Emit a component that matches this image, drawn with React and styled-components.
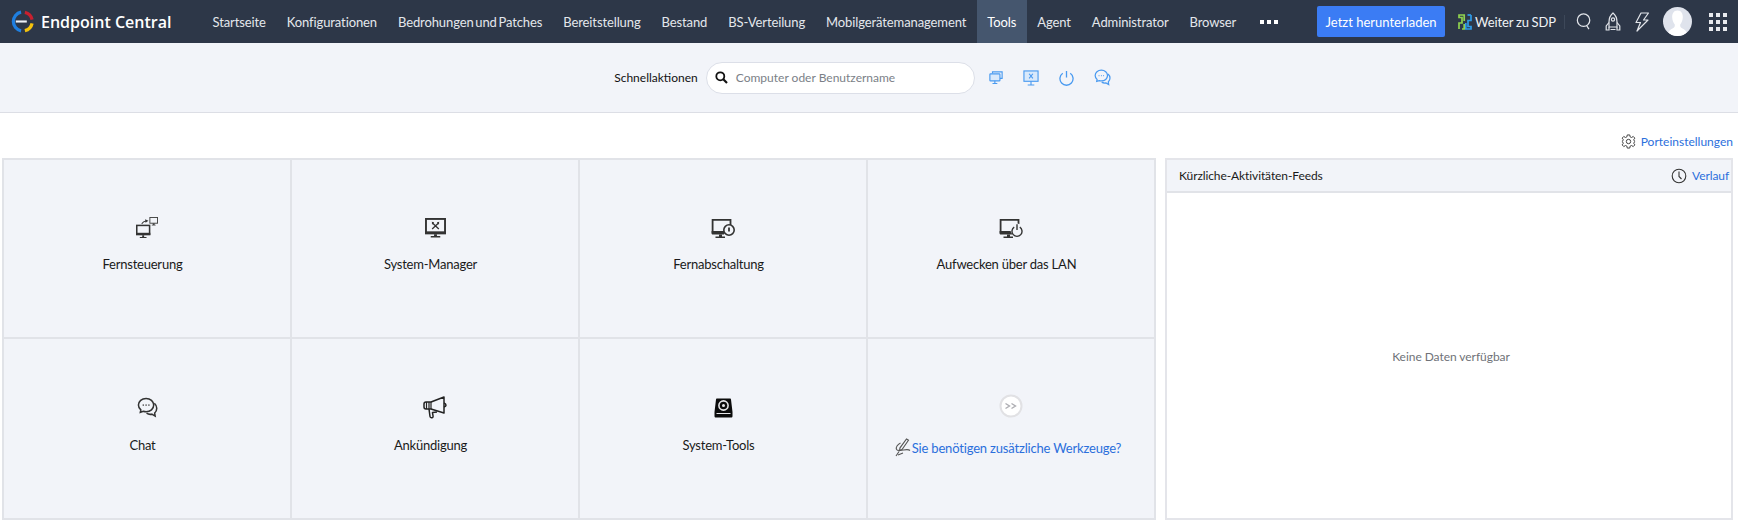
import React from "react";
import styled, { createGlobalStyle } from "styled-components";

const GlobalStyle = createGlobalStyle`
  html, body {
    margin: 0;
    padding: 0;
    background: #fff;
    font-family: Lato, "Open Sans", "Liberation Sans", sans-serif;
    overflow: hidden;
  }
  * { box-sizing: border-box; }
`;

const Page = styled.div`
  width: 1738px;
  height: 525px;
  display: flex;
  flex-direction: column;
`;

const Header = styled.header`
  height: 43px;
  background: #2d3748;
  display: flex;
  align-items: center;
  flex-shrink: 0;
`;

const Brand = styled.div`
  display: flex;
  align-items: center;
  gap: 7px;
  padding-left: 11px;
  width: 202px;
  color: #fff;
  font-family: "Open Sans", sans-serif;
  font-size: 16px;
  font-weight: 600;
`;

const Nav = styled.nav`
  display: flex;
  height: 100%;
`;

const NavItem = styled.a`
  display: flex;
  align-items: center;
  padding: 0 10.5px;
  color: ${(p) => (p.$active ? "#fff" : "#e4e7ec")};
  background: ${(p) => (p.$active ? "#45566e" : "transparent")};
  font-size: 13px;
  letter-spacing: -0.11px;
  word-spacing: -1.5px;
  white-space: nowrap;
`;

const Dots = styled.div`
  display: flex;
  align-items: center;
  gap: 3px;
  padding-left: 13px;
  i {
    width: 4px;
    height: 4px;
    background: #fff;
  }
`;

const HeaderRight = styled.div`
  margin-left: auto;
  display: flex;
  align-items: center;
  height: 100%;
`;

const DownloadButton = styled.button`
  width: 128px;
  height: 31px;
  border: 0;
  border-radius: 2px;
  background: #3b7cf4;
  color: #fff;
  font-family: inherit;
  font-size: 13px;
  padding: 0;
`;

const SdpLink = styled.div`
  display: flex;
  align-items: center;
  gap: 3px;
  margin-left: 13px;
  padding-right: 8px;
  border-right: 1px solid #3d4859;
  color: #f0f2f5;
  font-size: 13px;
  letter-spacing: -0.1px;
  word-spacing: -0.5px;
  height: 14px;
`;

const HeaderIcons = styled.div`
  display: flex;
  align-items: center;
  gap: 13px;
  margin-left: 11px;
  padding-right: 11px;
`;

const Avatar = styled.div`
  width: 29px;
  height: 29px;
  border-radius: 50%;
  background: #dfe3ec;
  overflow: hidden;
`;

const AppsGrid = styled.div`
  display: grid;
  grid-template-columns: repeat(3, 4px);
  grid-auto-rows: 4px;
  gap: 3px;
  margin-left: 4px;
  i {
    background: #e8eaee;
  }
`;

const Toolbar = styled.div`
  height: 70px;
  flex-shrink: 0;
  background: #f2f4f9;
  border-bottom: 1px solid #dcdee5;
  display: flex;
  align-items: center;
  justify-content: center;
  padding: 0 13px 0 0;
`;

const ToolbarLabel = styled.span`
  font-size: 12px;
  color: #111;
  margin-right: 8px;
`;

const SearchBox = styled.div`
  width: 269px;
  height: 32px;
  background: #fff;
  border: 1px solid #dcdfe8;
  border-radius: 16px;
  display: flex;
  align-items: center;
  gap: 8px;
  padding-left: 8px;
  color: #7b7f87;
  font-size: 12px;
`;

const QuickIcons = styled.div`
  display: flex;
  align-items: center;
  gap: 20px;
  margin-left: 14px;
`;

const PortRow = styled.div`
  height: 45px;
  flex-shrink: 0;
  display: flex;
  align-items: center;
  justify-content: flex-end;
  gap: 5px;
  padding: 11px 5px 0 0;
`;

const LinkText = styled.a`
  color: #2b6fdc;
  font-size: 12px;
`;

const Content = styled.main`
  display: flex;
  align-items: flex-start;
  gap: 9px;
  padding: 0 5px 0 2px;
`;

const Tiles = styled.div`
  width: 1154px;
  height: 362px;
  display: grid;
  grid-template-columns: repeat(4, 1fr);
  grid-template-rows: 179px 181px;
  border-top: 2px solid #e1e3e8;
  border-left: 2px solid #e1e3e8;
`;

const Tile = styled.div`
  background: #f2f4f9;
  border-right: 2px solid #e1e3e8;
  border-bottom: 2px solid #e1e3e8;
  display: flex;
  flex-direction: column;
  align-items: center;
  justify-content: center;
  gap: ${(p) => (p.$lower ? "16px" : "15px")};
  padding-bottom: 10px;
`;

const TileIcon = styled.div`
  height: 26px;
  display: flex;
  align-items: center;
  justify-content: center;
`;

const TileLabel = styled.div`
  font-size: 13px;
  color: #1a1a1a;
  line-height: 16px;
  letter-spacing: -0.22px;
  padding-right: 9px;
`;

const MoreTools = styled(LinkText)`
  display: flex;
  align-items: center;
  gap: 1px;
  font-size: 13px;
  line-height: 16px;
  letter-spacing: -0.18px;
  margin: 3px 0 -3px;
  padding-right: 6px;
`;

const FeedPanel = styled.section`
  width: 568px;
  height: 362px;
  border: 2px solid #e4e5ea;
  display: flex;
  flex-direction: column;
`;

const FeedHeader = styled.div`
  height: 33px;
  flex-shrink: 0;
  background: #f2f4f9;
  border-bottom: 2px solid #e1e3e8;
  display: flex;
  align-items: center;
  justify-content: space-between;
  padding: 0 2px 0 12px;
  font-size: 12px;
  letter-spacing: -0.1px;
  color: #1a1a1a;
`;

const HistoryLink = styled.div`
  display: flex;
  align-items: center;
  gap: 5px;
`;

const FeedBody = styled.div`
  flex: 1;
  display: flex;
  align-items: center;
  justify-content: center;
  color: #6f7278;
  font-size: 12px;
  letter-spacing: -0.05px;
  padding: 2px 0 0 4px;
`;

const Logo = () => (
  <svg width="23" height="23" viewBox="0 0 24 24" fill="none" strokeWidth="3.4">
    <path d="M10.5 2.2A10 10 0 0 0 10.5 21.8" stroke="#1f7fe0" />
    <path d="M5 12H16.5" stroke="#eef2f7" strokeWidth="2.2" />
    <path d="M14.5 2.4A10 10 0 0 1 22 10" stroke="#c8202f" />
    <path d="M22 14A10 10 0 0 1 14.5 21.6" stroke="#f4c20d" />
  </svg>
);

const SdpIcon = () => (
  <svg width="14" height="16" viewBox="0 0 14 16" fill="none" strokeWidth="1.7">
    <path d="M1 15V9H4V3.5H1V1H6.2V7" stroke="#8fd14f" />
    <path d="M4 15H6.2V10" stroke="#8fd14f" />
    <path d="M13 1V6.5H10V12.5H13V15H7.8V9" stroke="#2f9be8" />
    <path d="M9.5 1H13" stroke="#2f9be8" />
  </svg>
);

const SearchIcon = () => (
  <svg width="16" height="19" viewBox="0 0 18 20" fill="none" stroke="#e2e5ea" strokeWidth="1.4">
    <circle cx="8.5" cy="8.5" r="7" />
    <path d="M12 14.5L14.5 18.5" />
  </svg>
);

const RocketIcon = () => (
  <svg width="16" height="20" viewBox="0 0 16 20" fill="none" stroke="#e2e5ea" strokeWidth="1.2">
    <path d="M8 1C5 3.5 4 6.5 4 10V15H12V10C12 6.5 11 3.5 8 1Z" />
    <circle cx="8" cy="7.5" r="1.6" />
    <path d="M4 10.5L1.2 14V18H4V15M12 10.5L14.8 14V18H12V15M5.5 17.5H10.5" />
  </svg>
);

const BoltIcon = () => (
  <svg width="16" height="20" viewBox="0 0 16 20" fill="none" stroke="#e2e5ea" strokeWidth="1.2" strokeLinejoin="round">
    <path d="M7 1H14.5L9.5 8H14L3 19L6.5 10.5H2Z" />
  </svg>
);

const AvatarFace = () => (
  <svg width="29" height="29" viewBox="0 0 29 29">
    <path
      d="M14.5 3.5C10.5 3.5 9 7 9.2 10.5C9.4 13.5 10.5 16 11.8 17.5C12 19.5 11.5 20.5 9.5 21.5C7.5 22.5 6 23.5 5 26L7 29H22L24 26C23 23.5 21.5 22.5 19.5 21.5C17.5 20.5 17 19.5 17.2 17.5C18.5 16 19.6 13.5 19.8 10.5C20 7 18.5 3.5 14.5 3.5Z"
      fill="#fff"
    />
  </svg>
);

const MagnifierIcon = () => (
  <svg width="13" height="13" viewBox="0 0 13 13" fill="none" stroke="#111" strokeWidth="1.8">
    <circle cx="5.3" cy="5.3" r="4" />
    <path d="M8.3 8.3L12 12" strokeWidth="2.2" />
  </svg>
);

const QuickRemote = () => (
  <svg width="14" height="15" viewBox="0 0 16 16" fill="none" stroke="#4a9af0" strokeWidth="1.3">
    <path d="M4 3.5V1.5H15V9H12.5" />
    <rect x="1" y="3.8" width="11.5" height="8" rx="0.8" fill="#d9e9fb" />
    <path d="M6.7 11.8V14.5M4 14.8H9.5" />
  </svg>
);

const QuickSystem = () => (
  <svg width="16" height="16" viewBox="0 0 17 17" fill="none" stroke="#4a9af0" strokeWidth="1.2">
    <rect x="1" y="1" width="15" height="11" fill="#d9e9fb" />
    <path d="M6.5 4L10.5 9M10.5 4L6.5 9" />
    <path d="M8.5 12V15.5M5 16H12" />
  </svg>
);

const QuickPower = () => (
  <svg width="15" height="16" viewBox="0 0 16 17" fill="none" stroke="#4a9af0" strokeWidth="1.4">
    <path d="M8 1V8" />
    <path d="M4 3.5A7 7 0 1 0 12 3.5" />
  </svg>
);

const ChatBubbles = ({ color, size }) => (
  <svg width={size} height={size} viewBox="0 0 22 22" fill="none" stroke={color} strokeWidth="1.6">
    <path d="M9.5 1.5C5 1.5 1.5 4.5 1.5 8.5C1.5 10.5 2.5 12.3 4 13.5L3.5 16L6.7 15C7.6 15.3 8.5 15.5 9.5 15.5C14 15.5 17.5 12.5 17.5 8.5C17.5 4.5 14 1.5 9.5 1.5Z" />
    <path d="M18.2 6.5C19.8 8 20.7 9.8 20.7 11.8C20.7 14 19.8 15.6 18.5 16.8L19 20L15.5 18C13.5 18.5 11.5 18 10 17" />
    <path d="M6 8.5H7M9 8.5H10M12 8.5H13" strokeWidth="1.6" />
  </svg>
);

const RemoteIcon = () => (
  <svg width="22" height="22" viewBox="0 0 23 23" fill="none">
    <rect x="0.8" y="8.8" width="13.4" height="9.4" fill="#f2f4f9" stroke="#333" strokeWidth="1.6" />
    <path d="M0 16.5H15V19H0Z" fill="#333" />
    <path d="M6.5 19H8.5V21H6.5ZM4 21H11V22H4Z" fill="#333" />
    <rect x="14.5" y="0.5" width="8" height="6" fill="#f2f4f9" stroke="#444" />
    <path d="M17.5 6.5H19.5V8H17.5ZM16.5 8H20.5V8.8H16.5Z" fill="#444" />
    <path d="M6 7C7 5.5 8.5 4.5 10.5 4.2" stroke="#333" strokeWidth="1.2" />
    <path d="M9.5 2.4L13 3.8L10 6Z" fill="#333" />
  </svg>
);

const SystemIcon = () => (
  <svg width="21" height="20" viewBox="0 0 22 21" fill="none">
    <rect x="1" y="1" width="20" height="15" fill="#f2f4f9" stroke="#333" strokeWidth="2" />
    <path d="M0 14H22V17H0Z" fill="#333" />
    <path d="M9.5 17H12.5V19H9.5ZM6 19H16V20.5H6Z" fill="#333" />
    <path d="M7.5 5L14.5 11.5M14.5 5L7.5 11.5" stroke="#333" strokeWidth="1.4" />
    <path d="M7 4L9.5 4.5L8 7ZM15 4L12.5 4.5L14 7Z" fill="#333" />
  </svg>
);

const MonitorBase = () => (
  <>
    <path d="M15 14.5H1.6V1.8H19.5V7" stroke="#333" strokeWidth="1.8" fill="none" />
    <path d="M0.6 13H13V16.5H2C1 16.5 0.6 16 0.6 15Z" fill="#333" />
    <path d="M8 16.5H11V18.5H8ZM4.5 18.5H14V20H4.5Z" fill="#333" />
  </>
);

const ShutdownIcon = () => (
  <svg width="24" height="21" viewBox="0 0 24 21" fill="none">
    <MonitorBase />
    <circle cx="18" cy="12" r="5.2" fill="#f2f4f9" stroke="#333" strokeWidth="1.6" />
    <path d="M18 9.5V13.5" stroke="#333" strokeWidth="1.8" />
  </svg>
);

const WakeIcon = () => (
  <svg width="24" height="21" viewBox="0 0 24 21" fill="none">
    <MonitorBase />
    <circle cx="18" cy="12" r="6.5" fill="#f2f4f9" />
    <path d="M15.2 9.2A5 5 0 1 0 20.8 9.2" stroke="#333" strokeWidth="1.4" />
    <path d="M18 6.2V12" stroke="#333" strokeWidth="1.4" />
  </svg>
);

const MegaphoneIcon = () => (
  <svg width="24" height="23" viewBox="0 0 24 23" fill="none" stroke="#222" strokeWidth="1.5" strokeLinejoin="round">
    <path d="M21 1L8 6H3C1.8 6 1 7 1 8V11C1 12 1.8 13 3 13H8L21 17Z" />
    <path d="M3.5 6V13M6 6V13M8 6V13" strokeWidth="1.2" />
    <path d="M21 7C22.5 7.5 23 8.5 23 9.2C23 10 22.5 10.6 21 11" />
    <path d="M6 13L7 20.5C7.2 22 9.5 22.2 10 21C10.4 20 9.5 18 9.5 16.5L14 16" />
  </svg>
);

const DiskIcon = () => (
  <svg width="19" height="20" viewBox="0 0 19 20">
    <path d="M3 0.5H16C16.5 0.5 17 1 17 1.5L18.5 14V18C18.5 19 18 19.5 17 19.5H2C1 19.5 0.5 19 0.5 18V14L2 1.5C2 1 2.5 0.5 3 0.5Z" fill="#0c0c0c" />
    <circle cx="9.5" cy="7.5" r="4.6" fill="none" stroke="#e8e8ea" strokeWidth="1.6" />
    <circle cx="9.5" cy="7.5" r="1.5" fill="#e8e8ea" />
    <path d="M2.5 15.5H16.5" stroke="#e8e8ea" strokeWidth="1" />
  </svg>
);

const NextIcon = () => (
  <svg width="24" height="24" viewBox="0 0 24 24" fill="none">
    <circle cx="12" cy="12" r="10.5" fill="#fff" stroke="#e1e1e4" strokeWidth="2" />
    <path d="M6.5 9.5L10.5 12L6.5 14.5M12.5 9.5L16.5 12L12.5 14.5" stroke="#adadb2" strokeWidth="1.4" />
  </svg>
);

const PenIcon = () => (
  <svg width="16" height="19" viewBox="0 0 16 19" fill="none" stroke="#555" strokeWidth="1.1">
    <path d="M11.5 1L13.5 2.2L7 11.5L4.5 12.5L5 9.8Z" />
    <path d="M5.5 5C2.5 6.5 0.5 9.5 1.5 11.5C2.5 13 6 12.5 8.5 12C11 11.5 14 11.5 15 12.5" />
    <path d="M1 18L4 13.5M3 17L8 15" />
  </svg>
);

const GearIcon = () => (
  <svg width="15" height="15" viewBox="0 0 24 24" fill="none" stroke="#444" strokeWidth="1.6" strokeLinejoin="round">
    <circle cx="12" cy="12" r="3.5" />
    <path d="M10 1.5H14L14.6 4.6L16.9 5.6L19.6 3.9L22.1 6.6L20.3 9.2L21.2 11L22.5 12L21.2 13L20.3 14.8L22.1 17.4L19.6 20.1L16.9 18.4L14.6 19.4L14 22.5H10L9.4 19.4L7.1 18.4L4.4 20.1L1.9 17.4L3.7 14.8L2.8 13L1.5 12L2.8 11L3.7 9.2L1.9 6.6L4.4 3.9L7.1 5.6L9.4 4.6Z" />
  </svg>
);

const ClockIcon = () => (
  <svg width="16" height="16" viewBox="0 0 16 16" fill="none" stroke="#333" strokeWidth="1.1">
    <circle cx="8" cy="8" r="6.8" />
    <path d="M8 3.5V8.5L10.5 11" />
  </svg>
);

const navItems = [
  "Startseite",
  "Konfigurationen",
  "Bedrohungen und Patches",
  "Bereitstellung",
  "Bestand",
  "BS-Verteilung",
  "Mobilgerätemanagement",
  "Tools",
  "Agent",
  "Administrator",
  "Browser",
];

const tiles = [
  { label: "Fernsteuerung", icon: <RemoteIcon /> },
  { label: "System-Manager", icon: <SystemIcon /> },
  { label: "Fernabschaltung", icon: <ShutdownIcon /> },
  { label: "Aufwecken über das LAN", icon: <WakeIcon /> },
  { label: "Chat", icon: <ChatBubbles color="#333" size={21} />, lower: true },
  { label: "Ankündigung", icon: <MegaphoneIcon />, lower: true },
  { label: "System-Tools", icon: <DiskIcon />, lower: true },
];

export default function App() {
  return (
    <Page>
      <GlobalStyle />
      <Header>
        <Brand>
          <Logo />
          Endpoint Central
        </Brand>
        <Nav>
          {navItems.map((item) => (
            <NavItem key={item} $active={item === "Tools"}>
              {item}
            </NavItem>
          ))}
          <Dots>
            <i />
            <i />
            <i />
          </Dots>
        </Nav>
        <HeaderRight>
          <DownloadButton>Jetzt herunterladen</DownloadButton>
          <SdpLink>
            <SdpIcon />
            Weiter zu SDP
          </SdpLink>
          <HeaderIcons>
            <SearchIcon />
            <RocketIcon />
            <BoltIcon />
            <Avatar>
              <AvatarFace />
            </Avatar>
            <AppsGrid>
              {Array.from({ length: 9 }).map((_, i) => (
                <i key={i} />
              ))}
            </AppsGrid>
          </HeaderIcons>
        </HeaderRight>
      </Header>

      <Toolbar>
        <ToolbarLabel>Schnellaktionen</ToolbarLabel>
        <SearchBox>
          <MagnifierIcon />
          Computer oder Benutzername
        </SearchBox>
        <QuickIcons>
          <QuickRemote />
          <QuickSystem />
          <QuickPower />
          <ChatBubbles color="#4a9af0" size={17} />
        </QuickIcons>
      </Toolbar>

      <PortRow>
        <GearIcon />
        <LinkText>Porteinstellungen</LinkText>
      </PortRow>

      <Content>
        <Tiles>
          {tiles.map((tile) => (
            <Tile key={tile.label} $lower={tile.lower}>
              <TileIcon>{tile.icon}</TileIcon>
              <TileLabel>{tile.label}</TileLabel>
            </Tile>
          ))}
          <Tile $lower>
            <TileIcon>
              <NextIcon />
            </TileIcon>
            <MoreTools>
              <PenIcon />
              Sie benötigen zusätzliche Werkzeuge?
            </MoreTools>
          </Tile>
        </Tiles>
        <FeedPanel>
          <FeedHeader>
            Kürzliche-Aktivitäten-Feeds
            <HistoryLink>
              <ClockIcon />
              <LinkText>Verlauf</LinkText>
            </HistoryLink>
          </FeedHeader>
          <FeedBody>Keine Daten verfügbar</FeedBody>
        </FeedPanel>
      </Content>
    </Page>
  );
}
